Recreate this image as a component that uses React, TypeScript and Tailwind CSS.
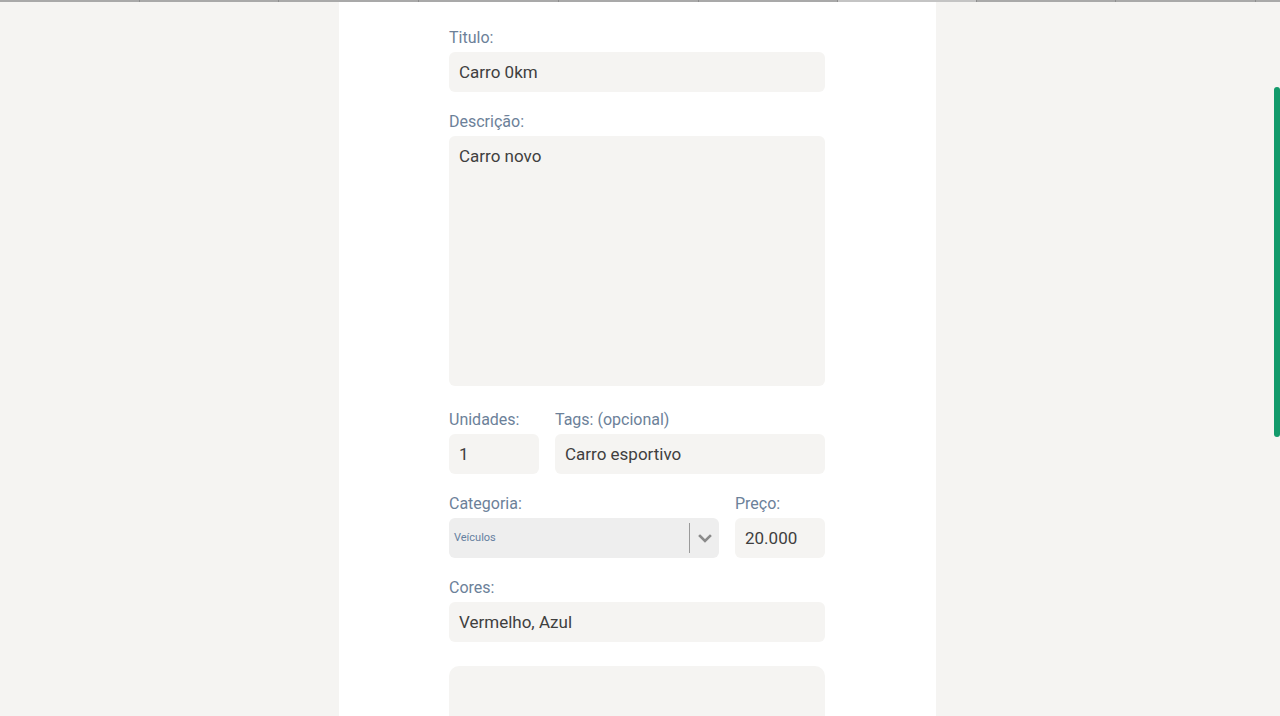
import React from "react";

const segs = [140, 139, 140, 140, 140, 139, 139, 139, 140, 24];

function Label({ children }: { children: React.ReactNode }) {
  return <div className="text-[16px] leading-[20px] text-[#6c8199] pt-px mb-[4px]">{children}</div>;
}

function Field({ value, className = "" }: { value: string; className?: string }) {
  return (
    <div className={"h-[40px] rounded-[6px] bg-[#f5f4f2] px-[10px] pt-px flex items-center text-[17px] text-[#3f3f3f] " + className}>
      {value}
    </div>
  );
}

export default function App() {
  return (
    <div className="w-[1280px] h-[716px] overflow-hidden bg-[#f5f4f2] flex flex-col" style={{ fontFamily: "Roboto, 'Noto Sans', sans-serif" }}>
      <div className="h-[2px] flex shrink-0">
        {segs.map((w, i) => (
          <div
            key={i}
            style={{ width: w }}
            className={(i === 6 ? "bg-[#c4c4c4]" : "bg-[#a9a9a9]") + " border-r border-[#8e8e8e] last:border-r-0"}
          />
        ))}
      </div>
      <div className="flex flex-1 min-h-0">
        <div className="flex-1 flex justify-center">
          <div className="w-[597px] bg-white flex justify-center pt-[25px]">
            <div className="w-[376px]">
              <Label>Titulo:</Label>
              <Field value="Carro 0km" />

              <div className="mt-[19px]">
                <Label>Descrição:</Label>
                <div className="h-[250px] rounded-[6px] bg-[#f5f4f2] px-[10px] pt-[10px] text-[17px] leading-[20px] text-[#3f3f3f]">
                  Carro novo
                </div>
              </div>

              <div className="mt-[23px] flex gap-[16px]">
                <div className="w-[90px]">
                  <Label>Unidades:</Label>
                  <Field value="1" />
                </div>
                <div className="flex-1">
                  <Label>Tags: (opcional)</Label>
                  <Field value="Carro esportivo" />
                </div>
              </div>

              <div className="mt-[19px] flex gap-[16px]">
                <div className="w-[270px]">
                  <Label>Categoria:</Label>
                  <div className="h-[40px] rounded-[6px] bg-[#eeeeee] flex items-center">
                    <div className="flex-1 pl-[5px] pt-px text-[11px] text-[#6580a0]">Veículos</div>
                    <div className="w-px h-[30px] bg-[#9a9a9a]" />
                    <div className="w-[29px] h-full flex items-center justify-center">
                      <svg width="14" height="9" viewBox="0 0 14 9">
                        <path d="M2 2 L7 7 L12 2" fill="none" stroke="#8a8a8a" strokeWidth="2.6" strokeLinecap="square" />
                      </svg>
                    </div>
                  </div>
                </div>
                <div className="flex-1">
                  <Label>Preço:</Label>
                  <Field value="20.000" />
                </div>
              </div>

              <div className="mt-[19px]">
                <Label>Cores:</Label>
                <Field value="Vermelho, Azul" />
              </div>

              <div className="mt-[24px] h-[120px] rounded-[10px] bg-[#f5f4f2]" />
            </div>
          </div>
        </div>
        <div className="w-[6px] relative">
          <div className="absolute left-0 top-[85px] w-[6px] h-[350px] rounded-full bg-[#139a6b]" />
        </div>
      </div>
    </div>
  );
}
